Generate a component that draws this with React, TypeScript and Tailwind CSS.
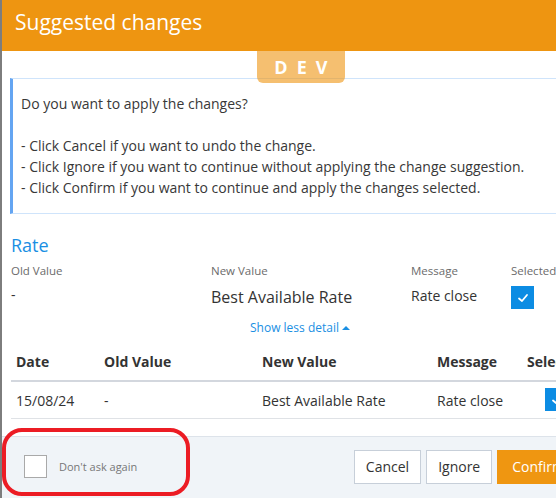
import React from "react";

function Check({ size = 12 }: { size?: number }) {
  return (
    <svg width={size} height={size} viewBox="0 0 12 12" fill="none">
      <polyline points="2,6.5 5,9 10,3" stroke="white" strokeWidth="1.8" strokeLinecap="round" strokeLinejoin="round" />
    </svg>
  );
}

export default function App() {
  return (
    <div className="relative w-[556px] h-[498px] overflow-hidden bg-white border-l-2 border-[#7d7d7d] font-['Open_Sans',sans-serif] text-[#333]">
      <div className="w-[600px] h-full flex flex-col">
        <div className="h-[51px] shrink-0 bg-[#ee9511] pl-[13px] pt-[7px]">
          <div className="text-[21px] leading-[30px] text-white">Suggested changes</div>
        </div>
        <div className="relative flex-1 flex flex-col">
          <div className="absolute z-10 left-[255px] top-0 w-[88px] h-[32px] rounded-b-[6px] bg-[#ee9511]/60 flex items-center justify-center">
            <span className="text-white font-bold text-[18px] leading-none tracking-[0.12em] pl-[2px]">D E V</span>
          </div>
          <div className="ml-[8px] mt-[27px] border-l-[3px] border-l-[#64a5f2] border-y border-y-[#cfe4fb] pl-[8px] pt-[14px] pb-[15px] text-[14px] leading-[21px] text-[#383838]">
            <div>Do you want to apply the changes?</div>
            <div>&nbsp;</div>
            <div>- Click Cancel if you want to undo the change.</div>
            <div>- Click Ignore if you want to continue without applying the change suggestion.</div>
            <div>- Click Confirm if you want to continue and apply the changes selected.</div>
          </div>

          <div className="px-[9px]">
            <div className="mt-[19px] text-[18px] leading-[24px] text-[#1a8fe3]">Rate</div>
            <div className="grid grid-cols-[200px_200px_100px_100px] mt-[6px] text-[11.5px] leading-[16px] text-[#6b6b6b]">
              <div>Old Value</div>
              <div>New Value</div>
              <div>Message</div>
              <div>Selected</div>
            </div>
            <div className="grid grid-cols-[200px_200px_100px_100px] mt-[7px] items-start">
              <div className="text-[14px] leading-[20px] -mt-[1px]">-</div>
              <div className="text-[16px] leading-[22px] text-[#333]">Best Available Rate</div>
              <div className="text-[14px] leading-[20px]">Rate close</div>
              <div>
                <div className="w-[23px] h-[23px] bg-[#0c8ce3] flex items-center justify-center">
                  <Check />
                </div>
              </div>
            </div>
            <div className="mt-[10px] flex justify-center items-center gap-[3px] text-[12px] leading-[17px] text-[#1a8fe3] pr-[4px]">
              <span>Show less detail</span>
              <svg width="8" height="6" viewBox="0 0 8 6"><polygon points="0,5 4,1 8,5" fill="#1a8fe3" /></svg>
            </div>

            <table className="mt-[6px] w-[590px] border-collapse text-[14px] text-left">
              <thead>
                <tr className="border-b-2 border-[#d3d7de]">
                  <th className="w-[88px] px-[5px] h-[39px] font-bold">Date</th>
                  <th className="w-[158px] px-[5px] font-bold">Old Value</th>
                  <th className="w-[175px] px-[5px] font-bold">New Value</th>
                  <th className="w-[90px] px-[5px] font-bold">Message</th>
                  <th className="px-[5px] font-bold">Selected</th>
                </tr>
              </thead>
              <tbody>
                <tr className="border-b border-[#dfe2e6]">
                  <td className="px-[5px] h-[37px] pt-[2px]">15/08/24</td>
                  <td className="px-[5px] pt-[2px]">-</td>
                  <td className="px-[5px] pt-[2px]">Best Available Rate</td>
                  <td className="px-[5px] pt-[2px]">Rate close</td>
                  <td className="px-[5px]">
                    <div className="ml-[18px] w-[23px] h-[23px] bg-[#0c8ce3] flex items-center justify-center">
                      <Check />
                    </div>
                  </td>
                </tr>
              </tbody>
            </table>
          </div>

          <div className="mt-[17px] flex-1 bg-[#f0f4f8] border-t border-[#dde3ea] flex items-start pt-[13px]">
            <div className="flex items-center mt-[5px] ml-[22px]">
              <div className="w-[23px] h-[23px] bg-white border border-[#a9a9a9]" />
              <span className="ml-[12px] text-[11px] text-[#777] mt-[2px]">Don't ask again</span>
            </div>
            <div className="ml-auto mr-[22px] flex gap-[5px]">
              <button className="h-[34px] px-[11px] bg-white border border-[#c7cfd9] text-[14px] text-[#333]">Cancel</button>
              <button className="h-[34px] px-[11px] bg-white border border-[#c7cfd9] text-[14px] text-[#333]">Ignore</button>
              <button className="h-[34px] px-[14px] bg-[#ef9611] border border-[#ef9611] text-[14px] text-white">Confirm</button>
            </div>
          </div>
        </div>
      </div>
      <div className="absolute left-0 top-[428px] w-[188px] h-[68px] border-[4px] border-[#ec1c24] rounded-[20px] pointer-events-none" />
    </div>
  );
}
